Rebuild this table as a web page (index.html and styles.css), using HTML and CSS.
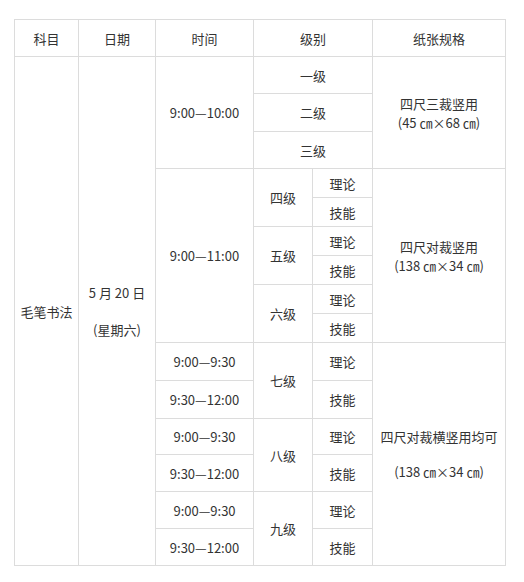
FILE: index.html
```html
<!DOCTYPE html>
<html lang="zh">
<head>
<meta charset="utf-8">
<link rel="stylesheet" href="styles.css">
</head>
<body>
<div class="wrap">
<table class="sched">
  <colgroup>
    <col class="c1"><col class="c2"><col class="c3"><col class="c4"><col class="c5"><col class="c6">
  </colgroup>
  <tr class="h37"><td>科目</td><td>日期</td><td>时间</td><td colspan="2">级别</td><td>纸张规格</td></tr>
  <tr class="h37">
    <td rowspan="16">毛笔书法</td>
    <td rowspan="16"><div class="two wide"><span>5 月 20 日</span><span>(星期六)</span></div></td>
    <td rowspan="3">9:00—10:00</td>
    <td colspan="2">一级</td>
    <td rowspan="3"><div class="two"><span>四尺三裁竖用</span><span>(45 ㎝×68 ㎝)</span></div></td>
  </tr>
  <tr class="h38"><td colspan="2">二级</td></tr>
  <tr class="h37"><td colspan="2">三级</td></tr>
  <tr class="h29">
    <td rowspan="6">9:00—11:00</td>
    <td rowspan="2">四级</td><td>理论</td>
    <td rowspan="6"><div class="two"><span>四尺对裁竖用</span><span>(138 ㎝×34 ㎝)</span></div></td>
  </tr>
  <tr class="h29"><td>技能</td></tr>
  <tr class="h29"><td rowspan="2">五级</td><td>理论</td></tr>
  <tr class="h29"><td>技能</td></tr>
  <tr class="h29"><td rowspan="2">六级</td><td>理论</td></tr>
  <tr class="h29"><td>技能</td></tr>
  <tr class="h38">
    <td>9:00—9:30</td><td rowspan="2">七级</td><td>理论</td>
    <td rowspan="6"><div class="two wide2"><span>四尺对裁横竖用均可</span><span>(138 ㎝×34 ㎝)</span></div></td>
  </tr>
  <tr class="h38"><td>9:30—12:00</td><td>技能</td></tr>
  <tr class="h36"><td>9:00—9:30</td><td rowspan="2">八级</td><td>理论</td></tr>
  <tr class="h37"><td>9:30—12:00</td><td>技能</td></tr>
  <tr class="h37"><td>9:00—9:30</td><td rowspan="2">九级</td><td>理论</td></tr>
  <tr class="h37"><td>9:30—12:00</td><td>技能</td></tr>
</table>
</div>
</body>
</html>
```
FILE: styles.css
```css
html, body { margin: 0; padding: 0; background: #fff; }
.wrap { padding: 19px 0 0 14px; }
.sched {
  border-collapse: collapse;
  table-layout: fixed;
  width: 492px;
  font-family: "Noto Sans CJK SC", "Microsoft YaHei", sans-serif;
  font-size: 13px;
  color: #333;
}
.sched td {
  border: 1px solid #dcdcdc;
  text-align: center;
  vertical-align: middle;
  padding: 0 2px;
  line-height: 19px;
}
.c1 { width: 64px; }
.c2 { width: 77px; }
.c3 { width: 98px; }
.c4 { width: 59px; }
.c5 { width: 60px; }
.c6 { width: 133px; }
.h29 { height: 29px; }
.h36 { height: 36px; }
.h37 { height: 37px; }
.h38 { height: 38px; }
.two { display: flex; flex-direction: column; align-items: center; }
.two.wide { gap: 18px; }
.two.wide2 { gap: 16px; }
```
